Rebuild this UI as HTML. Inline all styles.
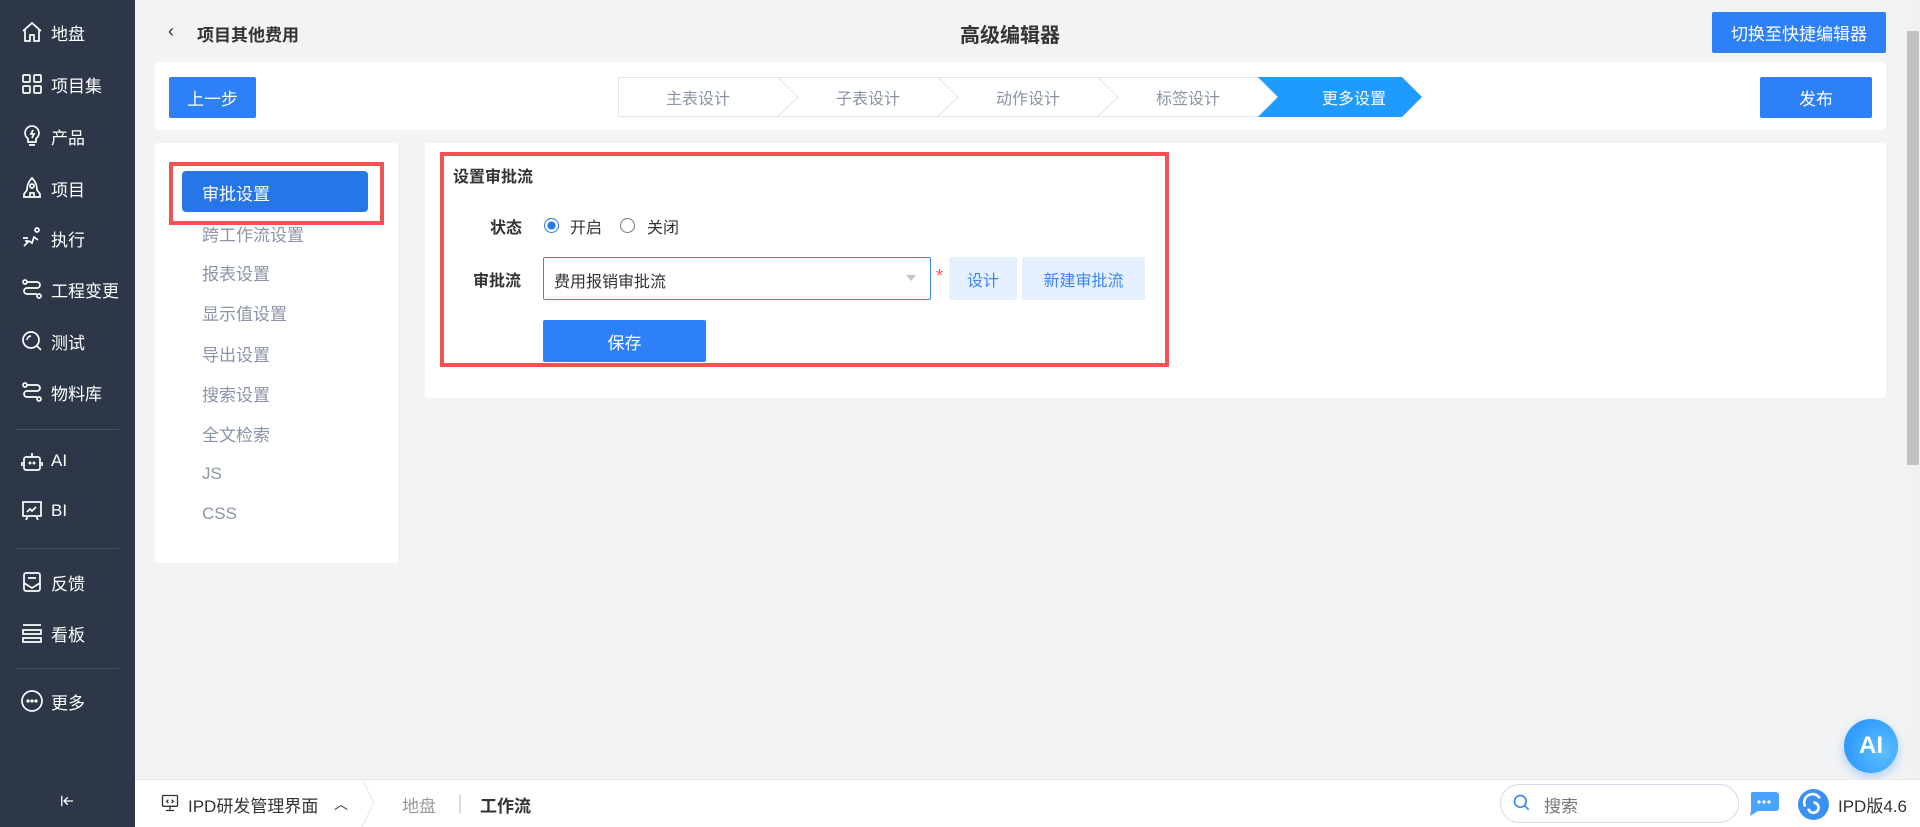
<!DOCTYPE html>
<html><head><meta charset="utf-8"><style>
*{margin:0;padding:0;box-sizing:border-box}
body{width:1920px;height:827px;overflow:hidden;background:#f2f3f5;font-family:"Liberation Sans","Noto Sans CJK SC",sans-serif;position:relative;color:#333}
.abs{position:absolute}
#side{left:0;top:0;width:135px;height:827px;background:#2e3748}
.si{position:absolute;left:20px;color:#fff;font-size:17px;display:flex;align-items:center;height:26px;transform:translateY(-14px)}
.si svg{width:24px;height:24px;flex-shrink:0;margin-right:7px;fill:none;stroke:#fff;stroke-width:1.7}
.dv{position:absolute;left:16px;width:103px;height:1px;background:#46506a}
.card{position:absolute;background:#fff;border-radius:3px}
.btn{position:absolute;background:#2e80f6;color:#fff;font-size:17px;display:flex;align-items:center;justify-content:center;border-radius:2px}
.step{position:absolute;top:77px;height:39px;width:160px;font-size:16px;color:#8b95a5;display:flex;align-items:center;justify-content:center}
.mi{position:absolute;left:202px;font-size:17px;color:#8a94a6;transform:translateY(-12px)}
.lb{position:absolute;font-size:16px;font-weight:bold;color:#333;transform:translateY(-11px)}
</style></head><body>
<div id="side" class="abs">
<div class="si" style="top:33px"><svg width="24" height="24" viewBox="0 0 24 24"><path d="M3 11L12 3l9 8M5 9v12h5v-6h4v6h5V9"/></svg>地盘</div>
<div class="si" style="top:85px"><svg width="24" height="24" viewBox="0 0 24 24"><rect x="3" y="3" width="7" height="7" rx="1"/><rect x="14" y="3" width="7" height="7" rx="1"/><rect x="3" y="14" width="7" height="7" rx="1"/><rect x="14" y="14" width="7" height="7" rx="1"/></svg>项目集</div>
<div class="si" style="top:137px"><svg width="24" height="24" viewBox="0 0 24 24"><path d="M12 2a7 7 0 0 0-4 12.7V18h8v-3.3A7 7 0 0 0 12 2zM9 21h6M13 6l-2 4h3l-2 4"/></svg>产品</div>
<div class="si" style="top:189px"><svg width="24" height="24" viewBox="0 0 24 24"><path d="M12 2c-3 3-5 7-5 12l-3 4v3h16v-3l-3-4c0-5-2-9-5-12zM10 21v-4h4v4"/><circle cx="12" cy="10" r="2"/></svg>项目</div>
<div class="si" style="top:239px"><svg width="24" height="24" viewBox="0 0 24 24"><circle cx="17" cy="4" r="2"/><path d="M4 20l5-5 3 2 2-6 4 3M3 12h5M5 15h3"/></svg>执行</div>
<div class="si" style="top:290px"><svg width="24" height="24" viewBox="0 0 24 24"><circle cx="5" cy="5" r="2"/><circle cx="19" cy="19" r="2"/><path d="M7 5h10a3 3 0 0 1 0 6H7a3 3 0 0 0 0 6h10"/></svg>工程变更</div>
<div class="si" style="top:342px"><svg width="24" height="24" viewBox="0 0 24 24"><circle cx="11" cy="11" r="8"/><path d="M17 17l4 4M7 11a4 4 0 0 1 4-4"/></svg>测试</div>
<div class="si" style="top:393px"><svg width="24" height="24" viewBox="0 0 24 24"><circle cx="5" cy="5" r="2"/><circle cx="19" cy="19" r="2"/><path d="M7 5h10a3 3 0 0 1 0 6H7a3 3 0 0 0 0 6h10"/></svg>物料库</div>
<div class="dv" style="top:429px"></div>
<div class="si" style="top:462px"><svg width="24" height="24" viewBox="0 0 24 24"><rect x="4" y="8" width="16" height="13" rx="2"/><path d="M12 8V4M2 13v4M22 13v4"/><circle cx="10" cy="14" r=".6"/><circle cx="14" cy="14" r=".6"/></svg>AI</div>
<div class="si" style="top:512px"><svg width="24" height="24" viewBox="0 0 24 24"><rect x="3" y="3" width="18" height="14"/><path d="M7 13l3-3 2 2 4-4M8 17l-2 4M16 17l2 4"/></svg>BI</div>
<div class="dv" style="top:548px"></div>
<div class="si" style="top:583px"><svg width="24" height="24" viewBox="0 0 24 24"><rect x="4" y="3" width="16" height="18" rx="2"/><path d="M4 13l8 5 8-5M8 8h8"/></svg>反馈</div>
<div class="si" style="top:634px"><svg width="24" height="24" viewBox="0 0 24 24"><path d="M3 4h18M3 9h18v4H3zM3 17h18v4H3z"/></svg>看板</div>
<div class="dv" style="top:668px"></div>
<div class="si" style="top:702px"><svg width="24" height="24" viewBox="0 0 24 24"><circle cx="12" cy="12" r="10"/><circle cx="8" cy="12" r=".8" fill="#fff"/><circle cx="12" cy="12" r=".8" fill="#fff"/><circle cx="16" cy="12" r=".8" fill="#fff"/></svg>更多</div>
<div class="si" style="top:802px;left:58px"><svg width="18" height="18" viewBox="0 0 24 24" style="width:18px;height:18px"><path d="M5 5v14M20 12H9M13 7l-5 5 5 5"/></svg></div>
</div>

<div class="abs" style="left:168px;top:21px;font-size:18px;color:#333">‹</div>
<div class="abs" style="left:197px;top:21px;font-size:17px;font-weight:bold;color:#333">项目其他费用</div>
<div class="abs" style="left:960px;top:19px;font-size:20px;font-weight:bold;color:#333">高级编辑器</div>
<div class="btn" style="left:1712px;top:12px;width:174px;height:41px">切换至快捷编辑器</div>
<div class="abs" style="left:1906px;top:0;width:14px;height:779px;background:#f1f1f1"></div>
<div class="abs" style="left:1907px;top:31px;width:12px;height:434px;background:#c1c1c1"></div>

<div class="card" style="left:155px;top:62px;width:1731px;height:68px"></div>
<div class="btn" style="left:169px;top:77px;width:87px;height:41px">上一步</div>
<svg class="abs" style="left:618px;top:77px" width="806" height="40">
<g fill="#fff" stroke="#e1e4ea">
<path d="M0.5 .5H160l20 19.5-20 19.5H.5z"/>
<path d="M160 .5h160l20 19.5-20 19.5H160l20-19.5z"/>
<path d="M320 .5h160l20 19.5-20 19.5H320l20-19.5z"/>
<path d="M480 .5h160l20 19.5-20 19.5H480l20-19.5z"/>
</g>
<path d="M640 0h144l20 20-20 20H640l20-20z" fill="#1f9bff"/>
</svg>
<div class="step" style="left:618px">主表设计</div>
<div class="step" style="left:788px">子表设计</div>
<div class="step" style="left:948px">动作设计</div>
<div class="step" style="left:1108px">标签设计</div>
<div class="step" style="left:1274px;color:#fff">更多设置</div>
<div class="btn" style="left:1760px;top:77px;width:112px;height:41px">发布</div>

<div class="card" style="left:155px;top:143px;width:243px;height:420px"></div>
<div class="abs" style="left:202px;top:221px;font-size:17px;color:#8a94a6">跨工作流设置</div>
<div class="abs" style="left:169px;top:162px;width:215px;height:63px;border:4px solid #f25252;background:transparent"></div>
<div class="abs" style="left:182px;top:171px;width:186px;height:41px;background:#2676e8;border-radius:4px;color:#fff;font-size:17px;padding:9px 20px">审批设置</div>
<div class="mi" style="top:272px">报表设置</div>
<div class="mi" style="top:312px">显示值设置</div>
<div class="mi" style="top:353px">导出设置</div>
<div class="mi" style="top:393px">搜索设置</div>
<div class="mi" style="top:433px">全文检索</div>
<div class="mi" style="top:476px">JS</div>
<div class="mi" style="top:516px">CSS</div>

<div class="card" style="left:425px;top:143px;width:1461px;height:255px"></div>
<div class="abs" style="left:440px;top:152px;width:729px;height:215px;border:4px solid #f25252"></div>
<div class="lb" style="left:453px;top:174px;font-size:16px">设置审批流</div>
<div class="lb" style="left:490px;top:225px">状态</div>
<div class="abs" style="left:544px;top:218px;width:15px;height:15px;border:1.5px solid #2676e8;border-radius:50%;background:radial-gradient(#2676e8 0 3.5px,#fff 4.5px)"></div>
<div class="abs" style="left:570px;top:214px;font-size:16px">开启</div>
<div class="abs" style="left:620px;top:218px;width:15px;height:15px;border:1.5px solid #777;border-radius:50%"></div>
<div class="abs" style="left:647px;top:214px;font-size:16px">关闭</div>
<div class="lb" style="left:473px;top:278px">审批流</div>
<div class="abs" style="left:543px;top:257px;width:388px;height:43px;border:1px solid #3b86f3;border-radius:2px;font-size:16px;padding:10px 10px;color:#333">费用报销审批流</div>
<div class="abs" style="left:906px;top:275px;width:0;height:0;border:5px solid transparent;border-top:6px solid #c0c4cc"></div>
<div class="abs" style="left:936px;top:266px;color:#f25252;font-size:18px">*</div>
<div class="abs" style="left:949px;top:257px;width:68px;height:43px;background:#e6f0fe;color:#3b86f3;font-size:16px;display:flex;align-items:center;justify-content:center;border-radius:2px">设计</div>
<div class="abs" style="left:1022px;top:257px;width:123px;height:43px;background:#e6f0fe;color:#3b86f3;font-size:16px;display:flex;align-items:center;justify-content:center;border-radius:2px">新建审批流</div>
<div class="btn" style="left:543px;top:320px;width:163px;height:42px">保存</div>

<div class="abs" style="left:1844px;top:719px;width:54px;height:54px;border-radius:50%;background:radial-gradient(circle at 70% 60%,#5cc0ff,#1f8cff);color:#fff;font-weight:bold;font-size:24px;display:flex;align-items:center;justify-content:center;box-shadow:0 4px 10px rgba(30,140,255,.35)">AI</div>

<div class="abs" style="left:135px;top:779px;width:1785px;height:48px;background:#fff;border-top:1px solid #e8e8e8"></div>
<svg class="abs" style="left:160px;top:793px" width="20" height="20" viewBox="0 0 24 24" fill="none" stroke="#333" stroke-width="1.6"><rect x="3" y="3" width="18" height="13" rx="1"/><path d="M12 16v4M7 21h10M10 8l-2 2 2 2M14 8l2 2-2 2"/></svg>
<div class="abs" style="left:188px;top:792px;font-size:17px;color:#333">IPD研发管理界面</div>
<div class="abs" style="left:334px;top:794px;font-size:14px;color:#333">︿</div>
<svg class="abs" style="left:360px;top:779px" width="20" height="48"><path d="M2 0l12 24L2 48" fill="none" stroke="#e4e6ea"/></svg>
<div class="abs" style="left:402px;top:792px;font-size:17px;color:#999">地盘</div>
<div class="abs" style="left:459px;top:794px;width:2px;height:20px;background:#ddd"></div>
<div class="abs" style="left:480px;top:792px;font-size:17px;font-weight:bold;color:#333">工作流</div>
<div class="abs" style="left:1500px;top:784px;width:239px;height:39px;border:1px solid #d5d9e8;border-radius:20px"></div>
<svg class="abs" style="left:1512px;top:793px" width="20" height="20" viewBox="0 0 24 24" fill="none" stroke="#3b86f3" stroke-width="2"><circle cx="10" cy="10" r="7"/><path d="M15 15l5 5"/></svg>
<div class="abs" style="left:1544px;top:792px;font-size:17px;color:#777">搜索</div>
<svg class="abs" style="left:1748px;top:791px" width="32" height="26" viewBox="0 0 32 26"><path d="M4 1h24a3 3 0 0 1 3 3v13a3 3 0 0 1-3 3H10l-8 5 1-5V4a3 3 0 0 1 1-3z" fill="#4aa3ff"/><circle cx="11" cy="11" r="1.6" fill="#fff"/><circle cx="16" cy="11" r="1.6" fill="#fff"/><circle cx="21" cy="11" r="1.6" fill="#fff"/></svg>
<svg class="abs" style="left:1797px;top:788px" width="33" height="33" viewBox="0 0 32 32"><circle cx="16" cy="16" r="15" fill="#3a8ff0"/><path d="M8 18a8 8 0 0 1 14-8M11 20a5 5 0 1 0 5-6" fill="none" stroke="#fff" stroke-width="2.5"/></svg>
<div class="abs" style="left:1838px;top:792px;font-size:17px;color:#333">IPD版4.6</div>
</body></html>
